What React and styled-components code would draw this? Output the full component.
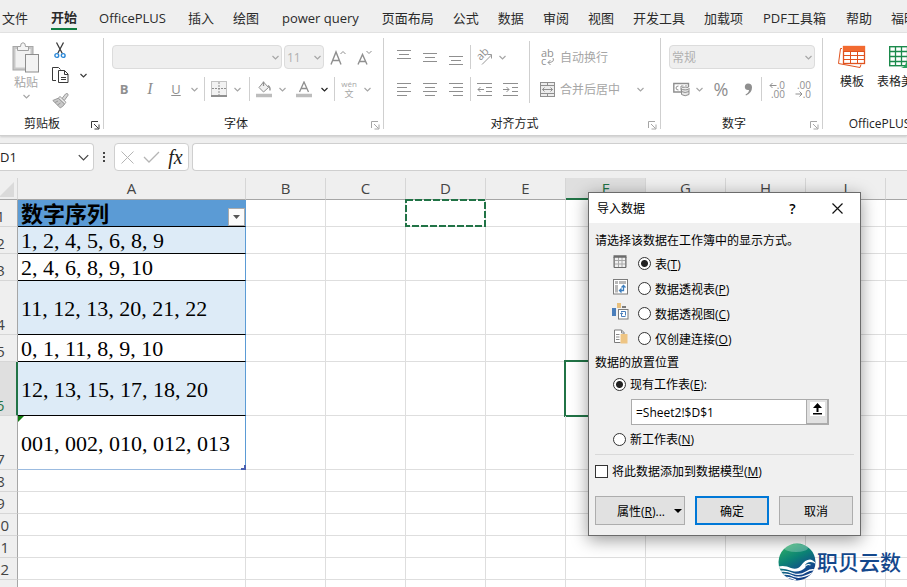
import React from 'react';
import styled, { createGlobalStyle, css } from 'styled-components';

const tabs = [
    { name: '文件' },
    { name: '开始', active: true },
    { name: 'OfficePLUS', pad: 3 },
    { name: '插入' },
    { name: '绘图' },
    { name: 'power query', pad: 4 },
    { name: '页面布局' },
    { name: '公式' },
    { name: '数据' },
    { name: '审阅' },
    { name: '视图' },
    { name: '开发工具' },
    { name: '加载项' },
    { name: 'PDF工具箱', pad: 1 },
    { name: '帮助' },
    { name: '福昕PDF' },
];

const columns = ['A', 'B', 'C', 'D', 'E', 'F', 'G', 'H', 'I', 'J'];

const rows = [
    { height: 27, text: '数字序列', kind: 'head' },
    { height: 27, text: '1, 2, 4, 5, 6, 8, 9', kind: 'band' },
    { height: 27, text: '2, 4, 6, 8, 9, 10', kind: 'plain' },
    { height: 54, text: '11, 12, 13, 20, 21, 22', kind: 'band' },
    { height: 27, text: '0, 1, 11, 8, 9, 10', kind: 'plain' },
    { height: 54, text: '12, 13, 15, 17, 18, 20', kind: 'band' },
    { height: 54, text: '001, 002, 010, 012, 013', kind: 'last' },
    { height: 22 },
    { height: 22 },
    { height: 22 },
    { height: 22 },
    { height: 22 },
    { height: 22 },
];

const Chevron = ({ color = '#a6a6a6', size = 7 }) => (
    <svg width={size} height={size} viewBox="0 0 7 7" fill="none" stroke={color} strokeWidth={size > 7 ? 0.8 : 1.2}>
        <path d="M0.5 2 L3.5 5 L6.5 2" />
    </svg>
);

const PasteIcon = () => (
    <svg width="28" height="31" viewBox="0 0 28 31" fill="none" stroke="#a0a0a0">
        <rect x="1" y="4.5" width="20" height="23.5" fill="#c8c8c8" stroke="#a8a8a8" />
        <rect x="3.5" y="7" width="15" height="18.5" fill="#f1f1f1" stroke="none" />
        <path d="M5.5 8.5V4.5H8.5Q8.5 0.7 11 0.7Q13.5 0.7 13.5 4.5H16.5V8.5Z" fill="#f4f4f4" />
        <rect x="13.5" y="12.5" width="13" height="17.5" fill="#f3f3f3" stroke="#8d8d8d" />
    </svg>
);

const CutIcon = () => (
    <svg width="12" height="17" viewBox="0 0 12 17" fill="none">
        <path d="M2.5 0.5L8.3 11.5M9.5 0.5L3.7 11.5" stroke="#3b3b3b" strokeWidth="1.3" />
        <circle cx="2.8" cy="13.5" r="1.9" stroke="#2b88d8" strokeWidth="1.4" />
        <circle cx="9.2" cy="13.5" r="1.9" stroke="#2b88d8" strokeWidth="1.4" />
    </svg>
);

const CopyIcon = () => (
    <svg width="17" height="17" viewBox="0 0 17 17" fill="none" stroke="#3b3b3b">
        <path d="M4 13.5H0.5V0.5H6.5L8.5 2.5" />
        <path d="M6.5 3.5H12.5L16 7V15.5H6.5Z" fill="#fff" />
        <path d="M12.5 3.5V7.5H16M9 10.5H14M9 12.5H14" />
    </svg>
);

const PainterIcon = () => (
    <svg width="17" height="16" viewBox="0 0 17 16" stroke="#999">
        <path d="M10 5.5L13.5 1Q15 -0.2 16 1.2Q16.5 2.2 15.5 3L12.3 7.5Z" fill="#d8d8d8" />
        <path d="M8 3.5L14 9.3L12.5 11L6.3 5.2Z" fill="#eee" />
        <path d="M6.3 5.2L0.8 7.5L8.2 14.8Q11 14 12.5 11Z" fill="#c8c8c8" />
        <path d="M3 9.5L6 8M5.5 12L8.5 10" fill="none" />
    </svg>
);

const GrowIcon = ({ small }) => (
    <svg width="16" height="17" viewBox="0 0 16 17" fill="none" stroke="#8f8f8f">
        <path d={small ? 'M1 15.5L5.5 5.5L10 15.5M2.5 12.5H8.5' : 'M1 15.5L6 3L11 15.5M2.7 11.5H9.3'} strokeWidth="1.4" />
        <path d={small ? 'M9.5 2L12 4.5L14.5 2' : 'M10.5 5L13 2.5L15.5 5'} />
    </svg>
);

const BordersIcon = () => (
    <svg width="16" height="16" viewBox="0 0 16 16" stroke="#8f8f8f">
        <rect x="0.5" y="0.5" width="15" height="14" fill="#f2f2f2" strokeDasharray="1 1" />
        <path d="M8 1V14M1 7.5H15" strokeDasharray="2 1" />
        <path d="M0 15H16" strokeWidth="2" />
    </svg>
);

const FillIcon = () => (
    <svg width="17" height="17" viewBox="0 0 17 17" fill="none" stroke="#8f8f8f">
        <path d="M7.5 1L12.5 6.5L7.5 11L3 6.5Z" fill="#f0f0f0" />
        <path d="M7.5 0.5V5M12 4.5Q14.5 6 14 9.5" strokeWidth="1.3" />
        <path d="M0 14.5H16" stroke="#bdbdbd" strokeWidth="3.5" />
    </svg>
);

const FontColorIcon = () => (
    <svg width="16" height="17" viewBox="0 0 16 17" fill="none">
        <path d="M3.5 11L8 1L12.5 11M5 7.5H11" stroke="#8f8f8f" strokeWidth="1.3" />
        <path d="M0 14.5H16" stroke="#bdbdbd" strokeWidth="3.5" />
    </svg>
);

const PhoneticIcon = () => (
    <svg width="18" height="18" viewBox="0 0 18 18" fill="#a6a6a6" fontFamily="Open Sans, Noto Sans CJK SC, sans-serif">
        <text x="9" y="7" fontSize="8" textAnchor="middle">wén</text>
        <text x="9" y="17" fontSize="9" textAnchor="middle">文</text>
    </svg>
);

// three-line alignment glyphs, each pair is [start, end] of one line
const lineSets = {
    top: { y: [1, 5, 9], x: [[0, 14], [2, 12], [0, 14]] },
    middle: { y: [4, 8, 12], x: [[0, 14], [2, 12], [0, 14]] },
    bottom: { y: [7, 11, 15], x: [[0, 14], [2, 12], [0, 14]] },
    left: { y: [2, 6, 10, 14], x: [[0, 14], [0, 10], [0, 14], [0, 10]] },
    center: { y: [2, 6, 10, 14], x: [[0, 14], [2, 12], [0, 14], [2, 12]] },
    right: { y: [2, 6, 10, 14], x: [[0, 14], [4, 14], [0, 14], [4, 14]] },
};

const AlignIcon = ({ kind }) => (
    <svg width="14" height="17" viewBox="0 0 14 17" stroke="#8f8f8f">
        {lineSets[kind].y.map((y, i) => (
            <path key={y} d={`M${lineSets[kind].x[i][0]} ${y + 0.5}H${lineSets[kind].x[i][1]}`} />
        ))}
    </svg>
);

const IndentIcon = ({ increase }) => (
    <svg width="15" height="17" viewBox="0 0 15 17" fill="none" stroke="#8f8f8f">
        <path d="M0 2.5H15M9 6.5H15M9 10.5H15M0 14.5H15" />
        <path d={increase ? 'M0 8.5H6M3.5 6L6 8.5L3.5 11' : 'M7 8.5H1M3.5 6L1 8.5L3.5 11'} />
    </svg>
);

const OrientationIcon = () => (
    <svg width="17" height="17" viewBox="0 0 17 17" fill="none" stroke="#999">
        <text x="0" y="0" transform="translate(4.5 12) rotate(-45)" fontSize="11" fill="#8f8f8f" stroke="none" fontFamily="Open Sans, sans-serif">ab</text>
        <path d="M6 15.5L15.5 6M11.5 5.5H15.5V9.5" />
    </svg>
);

const WrapIcon = () => (
    <svg width="15" height="17" viewBox="0 0 15 17" fill="none" stroke="#999" fontFamily="Open Sans, sans-serif">
        <text x="1" y="8" fontSize="11" fill="#8f8f8f" stroke="none">ab</text>
        <text x="1" y="16" fontSize="11" fill="#8f8f8f" stroke="none">c</text>
        <path d="M13 9Q15 13.5 8 13.5M10.5 11L8 13.5L10.5 16" />
    </svg>
);

const MergeIcon = () => (
    <svg width="15" height="15" viewBox="0 0 15 15" fill="none" stroke="#8f8f8f">
        <rect x="0.5" y="0.5" width="14" height="14" fill="#ececec" />
        <path d="M0.5 3.5H14.5M0.5 11.5H14.5M7.5 0.5V3.5M7.5 11.5V14.5M2.5 7.5H12.5M4.5 5.5L2.5 7.5L4.5 9.5M10.5 5.5L12.5 7.5L10.5 9.5" />
    </svg>
);

const CurrencyIcon = () => (
    <svg width="17" height="15" viewBox="0 0 17 15" fill="none" stroke="#8f8f8f">
        <path d="M9 10H0.8V1.5H15.5V5" strokeWidth="1.4" />
        <path d="M5.5 4Q3 4 3 6Q3 8 5.5 8M8 8.5V4H10.5M13 4.5V3" />
        <path d="M8.5 6.5V12.5Q12 15 16 12.5V6.5" fill="#e8e8e8" />
        <ellipse cx="12.2" cy="6.5" rx="3.8" ry="1.4" fill="#eee" />
        <path d="M8.5 9.5Q12 11.5 16 9.5" />
    </svg>
);

const DecimalIcon = ({ increase }) => (
    <svg width="17" height="17" viewBox="0 0 17 17" fill="none" stroke="#8f8f8f" fontFamily="Open Sans, sans-serif">
        <text x="16" y="8" fontSize="10" textAnchor="end" fill="#8f8f8f" stroke="none">{increase ? '.0' : '.00'}</text>
        <text x="16" y="16.5" fontSize="10" textAnchor="end" fill="#8f8f8f" stroke="none">{increase ? '.00' : '.0'}</text>
        <path d={increase ? 'M7.5 4.5H1M3.5 2L1 4.5L3.5 7' : 'M0.5 13H7M4.5 10.5L7 13L4.5 15.5'} />
    </svg>
);

const LauncherIcon = ({ color }) => (
    <svg width="9" height="9" viewBox="0 0 9 9" fill="none" stroke={color}>
        <path d="M0.5 7V0.5H7M3 3L7.5 7.5M8 3.5V8H3.5" />
    </svg>
);

const TemplateIcon = () => (
    <svg width="28" height="24" viewBox="0 0 28 24" fill="none" stroke="#e0531f">
        <path d="M4 3.5H2.5L0.5 18.5L22 22.5L23 19.5" />
        <rect x="5.5" y="1.5" width="21" height="17" fill="#fff" strokeWidth="1.3" />
        <path d="M5 1H27V6H5Z" fill="#f26a30" stroke="none" />
        <path d="M5.5 6.5H26.5M5.5 10.5H26.5M5.5 14.5H26.5M12.5 6.5V18.5M19.5 6.5V18.5" />
    </svg>
);

const BeautifyIcon = () => (
    <svg width="24" height="24" viewBox="0 0 24 24" fill="none" stroke="#1c8a4c">
        <rect x="0.7" y="1.7" width="22" height="19" fill="#fff" strokeWidth="1.4" />
        <path d="M0.5 6.5H23M0.5 11.5H23M0.5 16.5H23M6.5 1.5V21M12.5 1.5V21M18.5 1.5V21" strokeWidth="1.3" />
        <path d="M12 23Q16 22 17 17.5L24 12V23Z" fill="#27a35d" stroke="none" />
    </svg>
);

const TableIcon = () => (
    <svg width="15" height="16" viewBox="0 0 15 16" fill="none" stroke="#a8a8a8">
        <path d="M1.5 3V13.5H12.5V3M1 6.5H13M1 10H13M5.5 3V13M9 3V13" />
        <path d="M0.5 2.5H13.5" stroke="#6b6b6b" strokeWidth="2.5" />
        <path d="M1 3V13.5H13V3" stroke="#6b6b6b" />
    </svg>
);

const PivotTableIcon = () => (
    <svg width="15" height="16" viewBox="0 0 15 16" fill="none">
        <rect x="0.5" y="0.5" width="14" height="14.5" fill="#fff" stroke="#7b7b7b" />
        <path d="M2 2H5V5H2ZM6 2H13V5H6ZM2 6H5V13.5H2Z" fill="#b8b8b8" />
        <path d="M6.5 11.5H10.5V6.5M8.5 8.5L10.5 6.5L12.5 8.5M8.5 9.5L6.5 11.5L8.5 13.5" stroke="#3e7ebd" strokeWidth="1.3" />
    </svg>
);

const PivotChartIcon = () => (
    <svg width="17" height="17" viewBox="0 0 17 17" fill="none">
        <path d="M0 5H4V13H0Z" fill="#4a7ebb" />
        <path d="M5 0H9V5H5Z" fill="#e8c07d" />
        <path d="M10 3H14V5H10Z" fill="#7b7b7b" />
        <rect x="6.5" y="6.5" width="9.5" height="9.5" fill="#fff" stroke="#7b7b7b" />
        <path d="M9 8.5H13.5V12.5M13.5 13.5H9.5V10M8.2 11L9.5 9.7L11 11" stroke="#4a7ebb" />
    </svg>
);

const ConnectionIcon = () => (
    <svg width="15" height="16" viewBox="0 0 15 16" fill="none">
        <path d="M7.5 13.5H1.5V1H8.5L11 3.5V5" fill="#fff" stroke="#7b7b7b" />
        <path d="M8.5 1V4H11M3 5.5H6.5M3 8H6.5M3 10.5H6.5" stroke="#8b8b8b" />
        <path d="M7.5 5H14.5V14.5H7.5Z" fill="#eec584" />
    </svg>
);

const WaveLogo = () => (
    <svg width="38" height="38" viewBox="0 0 38 38" fill="none">
        <defs>
            <linearGradient id="globe" x1="0.2" y1="0" x2="0.7" y2="1">
                <stop offset="0" stopColor="#2fae66" />
                <stop offset="0.4" stopColor="#0b8274" />
                <stop offset="0.75" stopColor="#124a8c" />
                <stop offset="1" stopColor="#123a80" />
            </linearGradient>
            <clipPath id="disc">
                <circle cx="19" cy="19" r="18.5" />
            </clipPath>
        </defs>
        <g clipPath="url(#disc)">
            <rect width="38" height="38" fill="url(#globe)" />
            <ellipse cx="18" cy="5" rx="12" ry="4" fill="#fff" opacity="0.25" />
            <path d="M0 23.5Q7 22 13 25Q19 27.5 23 22.5Q27 16.5 32 16.5Q36 17 38 21Q33 17.5 29 20Q26 22 27.5 24.5Q22 30 14 28Q7 25 0 25.5Z" fill="#fff" />
            <path d="M27 23.5Q29 20.5 32.5 22" stroke="#fff" strokeWidth="1.2" />
            <path d="M1 28.5Q8 27 15 30.5Q22 33 28 29Q33 26 37 27" stroke="#fff" strokeWidth="1.3" />
            <path d="M3 31.5Q10 30 16 33.5Q23 36 34 30" stroke="#fff" strokeWidth="1.3" />
            <path d="M7 34.5Q12 33.5 18 37" stroke="#fff" strokeWidth="1.2" />
        </g>
    </svg>
);

const RibbonGroup = ({ label, children, width, compact, launcher = '#a6a6a6' }) => (
    <Group $w={width}>
        <GroupBody $compact={compact}>{children}</GroupBody>
        <GroupFooter>
            <GroupLabel $compact={compact}>{label}</GroupLabel>
            {launcher && (
                <Launcher aria-label={`${label}设置`}><LauncherIcon color={launcher} /></Launcher>
            )}
        </GroupFooter>
    </Group>
);

const Ribbon = () => (
    <RibbonBar>
        <RibbonGroup label="剪贴板" width={104} compact launcher="#3b3b3b">
            <BigButton $w={52} $muted>
                <PasteIcon />
                粘贴
                <Chevron />
            </BigButton>
            <div>
                <ToolRow $short><Tool $w={16} aria-label="剪切"><CutIcon /></Tool></ToolRow>
                <ToolRow $short>
                    <Tool $w={16} aria-label="复制"><CopyIcon /></Tool>
                    <Tool $w={30} aria-label="复制选项"><Chevron color="#3b3b3b" /></Tool>
                </ToolRow>
                <ToolRow $short><Tool $w={16} aria-label="格式刷"><PainterIcon /></Tool></ToolRow>
            </div>
        </RibbonGroup>

        <RibbonGroup label="字体" width={280}>
            <ToolColumn $pad={8}>
                <ToolRow $gap={2}>
                    <SelectBox $w={170}>
                        <PlainSelect aria-label="字体" disabled><option></option></PlainSelect>
                        <Chevron />
                    </SelectBox>
                    <SelectBox $w={40}>
                        <PlainSelect aria-label="字号" disabled><option>11</option></PlainSelect>
                        <Chevron />
                    </SelectBox>
                    <Tool $w={24} aria-label="增大字号"><GrowIcon /></Tool>
                    <Tool $w={26} aria-label="减小字号"><GrowIcon small /></Tool>
                </ToolRow>
                <ToolRow>
                    <Tool $w={24} $size={13}><b>B</b></Tool>
                    <Tool $w={28} $serif $size={16}><i>I</i></Tool>
                    <Tool $w={24} $size={13}><u>U</u></Tool>
                    <Tool $w={12} aria-label="下划线选项"><Chevron /></Tool>
                    <Divider $m={4} />
                    <Tool $w={20} aria-label="边框"><BordersIcon /></Tool>
                    <Tool $w={16} aria-label="边框选项"><Chevron /></Tool>
                    <Divider $m={4} />
                    <Tool $w={20} aria-label="填充颜色"><FillIcon /></Tool>
                    <Tool $w={16} aria-label="填充颜色选项"><Chevron /></Tool>
                    <Tool $w={28} aria-label="字体颜色"><FontColorIcon /></Tool>
                    <Tool $w={12} aria-label="字体颜色选项"><Chevron color="#222" /></Tool>
                    <Divider $m={4} />
                    <Tool $w={20} aria-label="拼音"><PhoneticIcon /></Tool>
                    <Tool $w={16} aria-label="拼音选项"><Chevron /></Tool>
                </ToolRow>
            </ToolColumn>
        </RibbonGroup>

        <RibbonGroup label="对齐方式" width={277}>
            <ToolColumn $pad={7} $w={141}>
                <ToolRow>
                    <Tool $w={26} aria-label="顶端对齐"><AlignIcon kind="top" /></Tool>
                    <Tool $w={26} aria-label="垂直居中"><AlignIcon kind="middle" /></Tool>
                    <Tool $w={26} aria-label="底端对齐"><AlignIcon kind="bottom" /></Tool>
                    <Divider $m={1} />
                    <Tool $w={24} aria-label="方向"><OrientationIcon /></Tool>
                    <Tool $w={12} aria-label="方向选项"><Chevron /></Tool>
                </ToolRow>
                <ToolRow>
                    <Tool $w={26} aria-label="左对齐"><AlignIcon kind="left" /></Tool>
                    <Tool $w={26} aria-label="居中"><AlignIcon kind="center" /></Tool>
                    <Tool $w={26} aria-label="右对齐"><AlignIcon kind="right" /></Tool>
                    <Divider $m={1} />
                    <Tool $w={24} aria-label="减少缩进量"><IndentIcon /></Tool>
                    <Tool $w={28} aria-label="增加缩进量"><IndentIcon increase /></Tool>
                </ToolRow>
            </ToolColumn>
            <Divider $m={4} $tall />
            <ToolColumn $pad={0}>
                <ToolRow>
                    <TextTool><WrapIcon />自动换行</TextTool>
                </ToolRow>
                <ToolRow>
                    <TextTool><MergeIcon />合并后居中</TextTool>
                    <Tool $w={40} aria-label="合并选项"><Chevron /></Tool>
                </ToolRow>
            </ToolColumn>
        </RibbonGroup>

        <RibbonGroup label="数字" width={162}>
            <ToolColumn $pad={8}>
                <ToolRow>
                    <SelectBox $w={146}>
                        <PlainSelect aria-label="数字格式" disabled><option>常规</option></PlainSelect>
                        <Chevron />
                    </SelectBox>
                </ToolRow>
                <ToolRow>
                    <Tool $w={24} aria-label="会计数字格式"><CurrencyIcon /></Tool>
                    <Tool $w={12} aria-label="会计选项"><Chevron /></Tool>
                    <Tool $w={32} $size={18}>%</Tool>
                    <Tool $w={22} aria-label="千位分隔样式">
                        <svg width="9" height="13" viewBox="0 0 9 13" fill="#8f8f8f">
                            <path d="M4 0.5Q8 0.5 8 4.5Q8 10 2 12.5L1.5 11.5Q5 9.5 5 7Q1 7.5 0.8 4Q1 0.5 4 0.5Z" />
                        </svg>
                    </Tool>
                    <Divider $m={2} />
                    <Tool $w={26} aria-label="增加小数位数"><DecimalIcon increase /></Tool>
                    <Tool $w={26} aria-label="减少小数位数"><DecimalIcon /></Tool>
                </ToolRow>
            </ToolColumn>
        </RibbonGroup>

        <RibbonGroup label="OfficePLUS" width={114} launcher={null}>
            <BigButton $w={58}><TemplateIcon />模板</BigButton>
            <BigButton $w={40}><BeautifyIcon />表格美化</BigButton>
        </RibbonGroup>
    </RibbonBar>
);

const FormulaBar = () => (
    <FormulaRow>
        <NameBox>
            <NameInput aria-label="名称框" defaultValue="D1" />
            <Chevron color="#444" size={11} />
        </NameBox>
        <svg width="20" height="14" viewBox="0 0 20 14" fill="#444">
            <path d="M9 2H11V4H9ZM9 6H11V8H9ZM9 10H11V12H9Z" />
        </svg>
        <FormulaActions>
            <Tool $w={24} aria-label="取消编辑">
                <svg width="13" height="13" viewBox="0 0 13 13" stroke="#b5b5b5"><path d="M0.5 0.5L12.5 12.5M12.5 0.5L0.5 12.5" /></svg>
            </Tool>
            <Tool $w={24} aria-label="输入">
                <svg width="17" height="12" viewBox="0 0 17 12" fill="none" stroke="#b5b5b5" strokeWidth="1.3"><path d="M1 6L6 11L16 1" /></svg>
            </Tool>
            <FxButton>fx</FxButton>
        </FormulaActions>
        <FormulaInput aria-label="编辑栏" />
    </FormulaRow>
);

const SheetCell = ({ column, row, index }) => {
    if (column === 'A' && row.text) {
        return (
            <DataCell $kind={row.kind}>
                {row.kind === 'head' ? (
                    <HeadContent>
                        {row.text}
                        <FilterButton aria-label="筛选">
                            <svg width="7" height="4" viewBox="0 0 7 4" fill="#555"><path d="M0 0H7L3.5 4Z" /></svg>
                        </FilterButton>
                    </HeadContent>
                ) : row.text}
                {row.kind === 'last' && <ErrorMark />}
                {row.kind === 'last' && (
                    <ResizeMark width="5" height="5" viewBox="0 0 5 5" fill="#4a5fb0"><path d="M3 0H5V5H0V3H3Z" /></ResizeMark>
                )}
            </DataCell>
        );
    }
    return (
        <Cell>
            {column === 'D' && index === 0 && (
                <Marquee>
                    <rect x="1" y="1" width="79" height="26" fill="none" stroke="#217346" strokeWidth="2" strokeDasharray="7 2" />
                </Marquee>
            )}
            {column === 'F' && index === 5 && <Selection />}
        </Cell>
    );
};

const Sheet = () => (
    <SheetArea>
        <Grid>
            <colgroup>
                <SizedCol $w={34} />
                <SizedCol $w={228} />
                {columns.slice(1, -1).map(c => <SizedCol key={c} $w={80} />)}
                <col />
            </colgroup>
            <thead>
                <tr>
                    <CornerHead aria-label="全选">
                        <svg width="15" height="15" viewBox="0 0 15 15" fill="#dadada"><path d="M15 0V15H0Z" /></svg>
                    </CornerHead>
                    {columns.map(c => <ColHead key={c} $on={c === 'F'}>{c}</ColHead>)}
                </tr>
            </thead>
            <tbody>
                {rows.map((row, i) => (
                    <SheetRow key={i} $h={row.height}>
                        <RowHead $on={i === 5}>{i + 1}</RowHead>
                        {columns.map(c => <SheetCell key={c} column={c} row={row} index={i} />)}
                    </SheetRow>
                ))}
            </tbody>
        </Grid>
    </SheetArea>
);

const views = [
    { id: 'table', text: '表', letter: 'T', icon: <TableIcon /> },
    { id: 'pivot', text: '数据透视表', letter: 'P', icon: <PivotTableIcon /> },
    { id: 'chart', text: '数据透视图', letter: 'C', icon: <PivotChartIcon /> },
    { id: 'link', text: '仅创建连接', letter: 'O', icon: <ConnectionIcon /> },
];

const ImportDialog = () => (
    <Dialog role="dialog" aria-label="导入数据">
        <TitleBar>
            <Title>导入数据</Title>
            <TitleButton aria-label="帮助">?</TitleButton>
            <TitleButton aria-label="关闭">
                <svg width="11" height="11" viewBox="0 0 11 11" stroke="#111" strokeWidth="1.2"><path d="M0.5 0.5L10.5 10.5M10.5 0.5L0.5 10.5" /></svg>
            </TitleButton>
        </TitleBar>
        <DialogBody>
            <Line>请选择该数据在工作簿中的显示方式。</Line>
            {views.map(v => (
                <Option key={v.id}>
                    <OptionIcon>{v.icon}</OptionIcon>
                    <Radio type="radio" name="view" defaultChecked={v.id === 'table'} />
                    <span>{v.text}(<u>{v.letter}</u>)</span>
                </Option>
            ))}
            <Line>数据的放置位置</Line>
            <Line as="label" $indent>
                <Radio type="radio" name="place" defaultChecked />
                <span>现有工作表(<u>E</u>):</span>
            </Line>
            <RangeBox>
                <RangeInput aria-label="位置" defaultValue="=Sheet2!$D$1" />
                <RangeButton aria-label="折叠对话框">
                    <svg width="15" height="14" viewBox="0 0 15 14">
                        <path d="M0 0H15V14H0Z" fill="#fff" />
                        <path d="M7.5 1L12 6H8.5V10H6.5V6H3ZM3 11H12V12.5H3Z" fill="#000" />
                    </svg>
                </RangeButton>
            </RangeBox>
            <Line as="label" $indent>
                <Radio type="radio" name="place" />
                <span>新工作表(<u>N</u>)</span>
            </Line>
            <Rule />
            <Line as="label">
                <CheckBox type="checkbox" />
                <span>将此数据添加到数据模型(<u>M</u>)</span>
            </Line>
            <Actions>
                <DialogButton $w={90} $menu>
                    <span>属性(<u>R</u>)...</span>
                    <svg width="8" height="4" viewBox="0 0 8 4"><path d="M0 0H8L4 4Z" /></svg>
                </DialogButton>
                <DialogButton $w={74} $primary>确定</DialogButton>
                <DialogButton $w={74}>取消</DialogButton>
            </Actions>
        </DialogBody>
    </Dialog>
);

const App = () => (
    <Page>
        <GlobalStyle />
        <TabBar>
            {tabs.map(t => (
                <Tab key={t.name} $active={t.active} $pad={t.pad}>{t.name}</Tab>
            ))}
        </TabBar>
        <Ribbon />
        <FormulaBar />
        <Sheet />
        <ImportDialog />
        <Watermark><WaveLogo />职贝云数</Watermark>
    </Page>
);

const GlobalStyle = createGlobalStyle`
    * {
        box-sizing: border-box;
    }
    body {
        margin: 0;
        overflow: hidden;
        font-family: "Open Sans", "Noto Sans CJK SC", sans-serif;
        font-size: 12px;
        color: #222;
        background: #fff;
    }
    button, input, select {
        font: inherit;
        color: inherit;
        margin: 0;
        padding: 0;
        border: 0;
        background: none;
        outline: none;
    }
    svg {
        display: block;
        flex-shrink: 0;
    }
`;

const Page = styled.div`
    position: relative;
    display: flex;
    flex-direction: column;
    height: 100vh;
    overflow: hidden;
`;

const TabBar = styled.nav`
    display: flex;
    flex-shrink: 0;
    gap: 19px;
    height: 33px;
    padding: 5px 0 2px 2px;
    background: #efefef;
    border-bottom: 1px solid #e3e3e3;
    overflow: hidden;
`;

const Tab = styled.button`
    flex-shrink: 0;
    height: 25px;
    margin: 0 ${p => p.$pad || 0}px;
    font-size: 13px;
    line-height: 24px;
    white-space: nowrap;
    color: #2b2b2b;
    ${p => p.$active && css`
        margin-left: 4px;
        font-weight: 700;
        border-bottom: 2px solid #107c41;
    `}
`;

const RibbonBar = styled.div`
    position: relative;
    display: flex;
    flex-shrink: 0;
    height: 103px;
    background: #fff;
    border-bottom: 1px solid #cfcfcf;
    box-shadow: 0 1px 2px rgba(0, 0, 0, 0.15);
    overflow: hidden;
`;

const Group = styled.section`
    display: flex;
    flex-direction: column;
    flex-shrink: 0;
    width: ${p => p.$w}px;
    margin: 5px 0 6px;
    border-right: 1px solid #cfcfcf;
`;

const GroupBody = styled.div`
    display: flex;
    flex-shrink: 0;
    height: 73px;
    padding-top: ${p => (p.$compact ? 0 : 3)}px;
`;

const GroupFooter = styled.div`
    display: flex;
    align-items: center;
    flex-shrink: 0;
    height: 24px;
`;

const GroupLabel = styled.span`
    flex: 1;
    padding-right: ${p => (p.$compact ? 4 : 0)}px;
    text-align: center;
`;

const Launcher = styled.button`
    display: flex;
    justify-content: center;
    width: 15px;
    padding-top: 4px;
`;

const ToolColumn = styled.div`
    padding-left: ${p => p.$pad}px;
    ${p => p.$w && css`width: ${p.$w}px;`}
`;

const ToolRow = styled.div`
    display: flex;
    align-items: center;
    gap: ${p => p.$gap || 0}px;
    height: ${p => (p.$short ? 25 : 32)}px;
`;

const Tool = styled.button`
    display: flex;
    align-items: center;
    justify-content: center;
    flex-shrink: 0;
    width: ${p => p.$w}px;
    height: 24px;
    font-family: ${p => (p.$serif ? '"Liberation Serif", serif' : 'inherit')};
    font-size: ${p => p.$size || 14}px;
    color: #8f8f8f;
`;

const TextTool = styled.button`
    display: flex;
    align-items: center;
    gap: 5px;
    padding-left: 6px;
    color: #a6a6a6;
    white-space: nowrap;
`;

const BigButton = styled.button`
    display: flex;
    flex-direction: column;
    align-items: center;
    flex-shrink: 0;
    gap: ${p => (p.$muted ? 1 : 4)}px;
    width: ${p => p.$w}px;
    height: 70px;
    padding-top: 4px;
    line-height: 18px;
    white-space: nowrap;
    color: ${p => (p.$muted ? '#a6a6a6' : '#222')};
`;

const Divider = styled.span`
    flex-shrink: 0;
    width: 1px;
    height: ${p => (p.$tall ? 62 : 24)}px;
    margin: 0 ${p => p.$m}px;
    background: #cfcfcf;
`;

const SelectBox = styled.span`
    display: flex;
    align-items: center;
    width: ${p => p.$w}px;
    height: 24px;
    padding: 0 2px;
    background: #efefef;
    border: 1px solid #dcdcdc;
    border-radius: 4px;
`;

const PlainSelect = styled.select`
    appearance: none;
    flex: 1;
    min-width: 0;
    color: #b0b0b0;
    opacity: 1;
`;

const FormulaRow = styled.div`
    display: flex;
    align-items: center;
    flex-shrink: 0;
    height: 42px;
    background: #efefef;
`;

const box = css`
    display: flex;
    align-items: center;
    height: 28px;
    background: #fff;
    border: 1px solid #cfcfcf;
    border-radius: 4px;
`;

const NameBox = styled.div`
    ${box}
    width: 94px;
    padding-right: 4px;
    border-left: 0;
    border-radius: 0 4px 4px 0;
`;

const NameInput = styled.input`
    flex: 1;
    min-width: 0;
    font-size: 13px;
`;

const FormulaActions = styled.div`
    ${box}
    width: 75px;
`;

const FxButton = styled.button`
    flex: 1;
    font-family: "Liberation Serif", serif;
    font-size: 20px;
    font-style: italic;
    line-height: 20px;
    color: #222;
`;

const FormulaInput = styled.input`
    ${box}
    flex: 1;
    min-width: 0;
    margin-left: 3px;
    border-right: 0;
    border-radius: 4px 0 0 4px;
`;

const SheetArea = styled.main`
    flex: 1;
    min-height: 0;
    overflow: hidden;
`;

const Grid = styled.table`
    width: calc(100% + 16px);
    min-width: 982px;
    margin-left: -16px;
    table-layout: fixed;
    border-collapse: separate;
    border-spacing: 0;
`;

const SizedCol = styled.col`
    width: ${p => p.$w}px;
`;

const head = css`
    padding: 0;
    font-size: 15px;
    font-weight: 400;
    color: ${p => (p.$on ? '#217346' : '#444')};
    background: ${p => (p.$on ? '#dfdfdf' : '#efefef')};
`;

const ColHead = styled.th`
    ${head}
    height: 22px;
    line-height: 19px;
    border-right: 1px solid #d6d6d6;
    border-bottom: ${p => (p.$on ? '2px solid #217346' : '1px solid #a6a6a6')};
`;

const CornerHead = styled.th`
    ${head}
    border-right: 1px solid #d6d6d6;
    border-bottom: 1px solid #a6a6a6;

    svg {
        margin: 2px 3px 0 auto;
    }
`;

const SheetRow = styled.tr`
    height: ${p => p.$h}px;
`;

const RowHead = styled.th`
    ${head}
    line-height: 20px;
    vertical-align: bottom;
    border-right: ${p => (p.$on ? '2px solid #217346' : '1px solid #a6a6a6')};
    border-bottom: 1px solid #d6d6d6;
`;

const Cell = styled.td`
    position: relative;
    padding: 0;
    border-right: 1px solid #dedede;
    border-bottom: 1px solid #dedede;
`;

const bands = {
    head: css`
        padding-top: 0;
        font-weight: 700;
        background: #5b9bd5;
    `,
    band: css`
        background: #ddebf7;
    `,
    plain: css`
        background: #fff;
    `,
    last: css`
        border-bottom-color: #9bbbe0;
    `,
};

const DataCell = styled(Cell)`
    padding: 2px 0 0 3px;
    font-family: "Liberation Serif", "Noto Sans CJK SC", serif;
    font-size: 22px;
    line-height: 24px;
    color: #000;
    border-right-color: #5b9bd5;
    border-bottom-color: #000;
    ${p => bands[p.$kind]}
`;

const HeadContent = styled.div`
    display: flex;
    align-items: flex-end;
    justify-content: space-between;
    height: 26px;
    line-height: 22px;
`;

const FilterButton = styled.button`
    display: flex;
    align-items: center;
    justify-content: center;
    width: 17px;
    height: 18px;
    background: #fbfbfb;
    border: 1px solid #ababab;
`;

const ErrorMark = styled.span`
    position: absolute;
    left: 0;
    top: 0;
    border-top: 6px solid #107c10;
    border-right: 6px solid transparent;
`;

const ResizeMark = styled.svg`
    position: absolute;
    right: -1px;
    bottom: -1px;
`;

const Marquee = styled.svg`
    position: absolute;
    left: -1px;
    top: -1px;
    width: 81px;
    height: 28px;
`;

const Selection = styled.span`
    position: absolute;
    inset: -2px;
    border: 2px solid #217346;
`;

const Dialog = styled.div`
    position: absolute;
    left: 588px;
    top: 192px;
    width: 273px;
    color: #000;
    background: #f0f0f0;
    border: 1px solid #6b6b6b;
    box-shadow: 0 4px 16px rgba(0, 0, 0, 0.4);
`;

const TitleBar = styled.header`
    display: flex;
    align-items: center;
    height: 30px;
    padding-left: 8px;
    background: #fff;
`;

const Title = styled.span`
    flex: 1;
`;

const TitleButton = styled.button`
    display: flex;
    align-items: center;
    justify-content: center;
    width: 45px;
    height: 30px;
    font-size: 14px;
    font-weight: 600;
`;

const DialogBody = styled.div`
    padding: 6px 6px 10px;
`;

const Line = styled.div`
    display: flex;
    align-items: center;
    gap: 4px;
    height: 22px;
    padding-left: ${p => (p.$indent ? 18 : 0)}px;
    white-space: nowrap;
`;

const Option = styled.label`
    display: flex;
    align-items: center;
    gap: 4px;
    height: 25px;
    padding-left: 16px;
`;

const OptionIcon = styled.span`
    display: flex;
    justify-content: center;
    width: 19px;
    margin-right: 4px;
    padding-bottom: 4px;
`;

const Radio = styled.input`
    appearance: none;
    flex-shrink: 0;
    width: 13px;
    height: 13px;
    border: 1px solid #333;
    border-radius: 50%;
    background: #fff;

    &:checked {
        background: radial-gradient(circle, #222 3px, #fff 4px);
    }
`;

const CheckBox = styled.input`
    appearance: none;
    width: 13px;
    height: 13px;
    border: 1px solid #333;
    background: #fff;
`;

const RangeBox = styled.div`
    display: flex;
    height: 26px;
    margin: 4px 25px 3px 36px;
    background: #fff;
    border: 1px solid #ababab;
`;

const RangeInput = styled.input`
    flex: 1;
    min-width: 0;
    padding-left: 4px;
`;

const RangeButton = styled.button`
    display: flex;
    justify-content: center;
    width: 22px;
    padding-top: 2px;
    background: #e1e1e1;
    border: 1px solid #ababab;
    border-top: 0;
`;

const Rule = styled.hr`
    height: 1px;
    margin: 4px 0 5px;
    border: 0;
    background: #d9d9d9;
`;

const Actions = styled.div`
    display: flex;
    gap: 10px;
    margin-top: 14px;
`;

const DialogButton = styled.button`
    display: flex;
    align-items: center;
    justify-content: ${p => (p.$menu ? 'flex-end' : 'center')};
    gap: 9px;
    width: ${p => p.$w}px;
    height: 29px;
    padding-right: ${p => (p.$menu ? 2 : 0)}px;
    background: #e1e1e1;
    border: ${p => (p.$primary ? '2px solid #0078d7' : '1px solid #adadad')};
    white-space: nowrap;
`;

const Watermark = styled.div`
    position: absolute;
    right: 6px;
    bottom: 6px;
    display: flex;
    align-items: center;
    gap: 1px;
    font-size: 21px;
    font-weight: 500;
    line-height: 24px;
    color: #14488c;
`;

export default App;
